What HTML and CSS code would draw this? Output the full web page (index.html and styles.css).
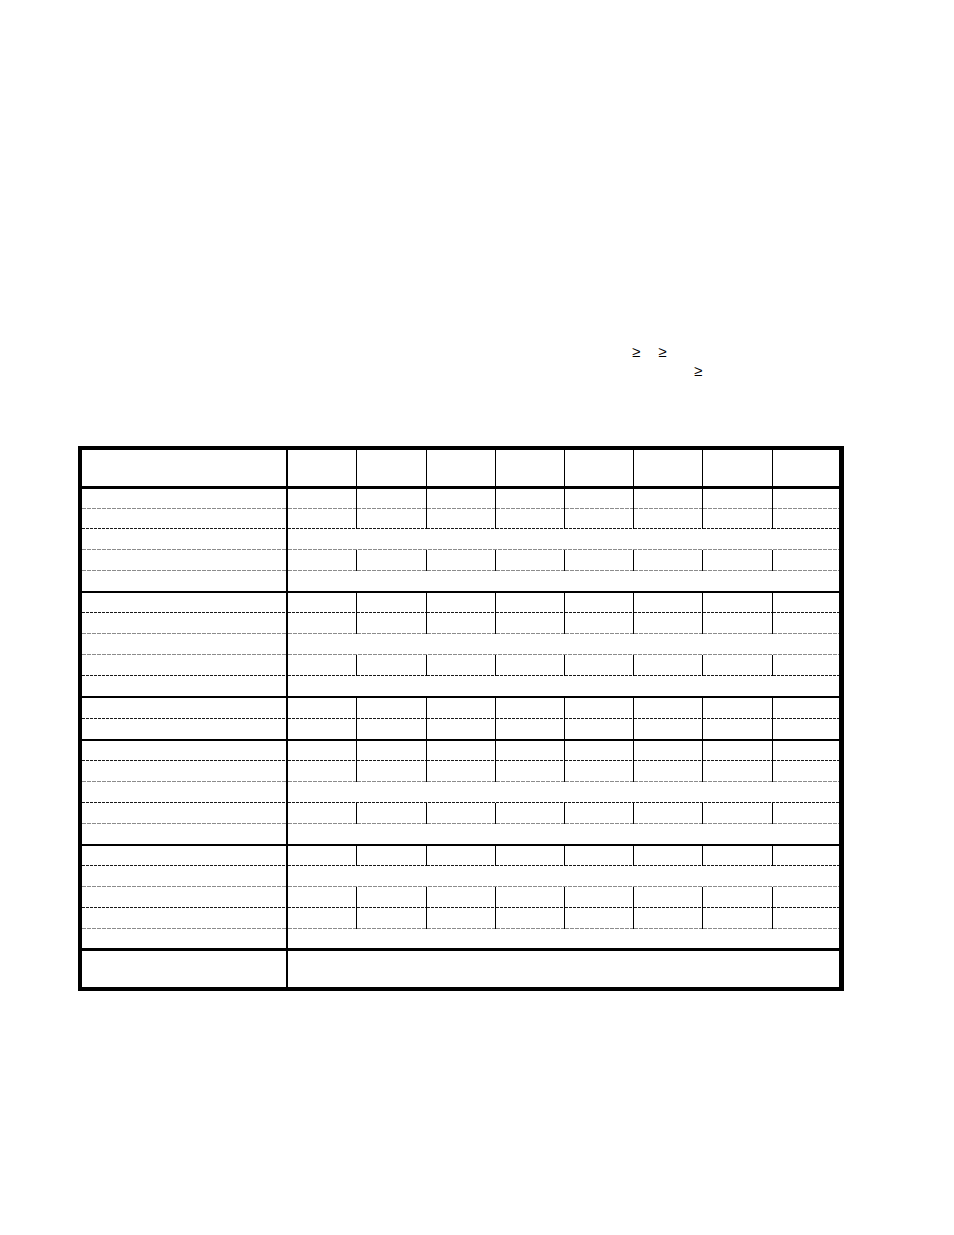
FILE: index.html
```html
<!DOCTYPE html>
<html>
<head>
<meta charset="utf-8">
<title>Table</title>
<link rel="stylesheet" href="styles.css">
</head>
<body>
<div class="page">
  <div class="intro">
    <p class="line line-1"><span class="ge ge-a">≥</span><span class="ge ge-b">≥</span></p>
    <p class="line line-2"><span class="ge ge-c">≥</span></p>
  </div>

  <table class="grid">
    <colgroup>
      <col class="w204"><col class="w70"><col class="w70"><col class="w69"><col class="w69"><col class="w69"><col class="w69"><col class="w70"><col class="w67">
    </colgroup>
    <tbody>
      <tr class="hd"><td></td><td></td><td></td><td></td><td></td><td></td><td></td><td></td><td></td></tr>
      <tr class="h20 g"><td></td><td></td><td></td><td></td><td></td><td></td><td></td><td></td><td></td></tr>
      <tr class="h20 k"><td></td><td></td><td></td><td></td><td></td><td></td><td></td><td></td><td></td></tr>
      <tr class="h21 g"><td></td><td colspan="8"></td></tr>
      <tr class="h21 g"><td></td><td></td><td></td><td></td><td></td><td></td><td></td><td></td><td></td></tr>
      <tr class="h22 b2"><td></td><td colspan="8"></td></tr>
      <tr class="h20 k"><td></td><td></td><td></td><td></td><td></td><td></td><td></td><td></td><td></td></tr>
      <tr class="h21 g"><td></td><td></td><td></td><td></td><td></td><td></td><td></td><td></td><td></td></tr>
      <tr class="h21 g"><td></td><td colspan="8"></td></tr>
      <tr class="h21 k"><td></td><td></td><td></td><td></td><td></td><td></td><td></td><td></td><td></td></tr>
      <tr class="h22 b2"><td></td><td colspan="8"></td></tr>
      <tr class="h21 k"><td></td><td></td><td></td><td></td><td></td><td></td><td></td><td></td><td></td></tr>
      <tr class="h22 b2"><td></td><td></td><td></td><td></td><td></td><td></td><td></td><td></td><td></td></tr>
      <tr class="h20 k"><td></td><td></td><td></td><td></td><td></td><td></td><td></td><td></td><td></td></tr>
      <tr class="h21 g"><td></td><td></td><td></td><td></td><td></td><td></td><td></td><td></td><td></td></tr>
      <tr class="h21 k"><td></td><td colspan="8"></td></tr>
      <tr class="h21 g"><td></td><td></td><td></td><td></td><td></td><td></td><td></td><td></td><td></td></tr>
      <tr class="h22 b2"><td></td><td colspan="8"></td></tr>
      <tr class="h20 k"><td></td><td></td><td></td><td></td><td></td><td></td><td></td><td></td><td></td></tr>
      <tr class="h21 g"><td></td><td colspan="8"></td></tr>
      <tr class="h21 k"><td></td><td></td><td></td><td></td><td></td><td></td><td></td><td></td><td></td></tr>
      <tr class="h21 g"><td></td><td></td><td></td><td></td><td></td><td></td><td></td><td></td><td></td></tr>
      <tr class="h22 b3"><td></td><td colspan="8"></td></tr>
      <tr class="h36"><td></td><td colspan="8"></td></tr>
    </tbody>
  </table>
</div>
</body>
</html>
```

FILE: styles.css
```css
html, body {
  margin: 0;
  padding: 0;
  background: #fff;
}

body {
  font-family: "Liberation Sans", Arial, sans-serif;
  color: #000;
}

.page {
  padding-top: 342px;
}

.intro {
  height: 104px;
}

.line {
  margin: 0;
  height: 19px;
  line-height: 19px;
  font-size: 15px;
  white-space: nowrap;
}

.ge {
  display: inline-block;
}

.ge-a { margin-left: 632px; }
.ge-b { margin-left: 18px; }
.ge-c { margin-left: 694px; }

.grid {
  box-sizing: border-box;
  width: 766px;
  margin-left: 78px;
  table-layout: fixed;
  border-collapse: separate;
  border-spacing: 0;
  border-style: solid;
  border-color: #000;
  border-width: 4px 5px 4px 4px;
}

.w204 { width: 204px; }
.w70 { width: 70px; }
.w69 { width: 69px; }
.w67 { width: 67px; }

.grid td {
  padding: 0;
  box-sizing: border-box;
}

.grid td + td {
  border-left: 1px solid #000;
}

.grid td:nth-child(2) {
  border-left-width: 2px;
}

.hd { height: 39px; }
.hd td { border-bottom: 3px solid #000; }

.h20 { height: 20px; }
.h21 { height: 21px; }
.h22 { height: 22px; }
.h36 { height: 36px; }

.g td {
  background: repeating-linear-gradient(to right, #8c8c8c 0 4px, transparent 4px 5px) left bottom / 100% 1px no-repeat;
}

.k td {
  background: repeating-linear-gradient(to right, #1a1a1a 0 3px, transparent 3px 4px) left bottom / 100% 1px no-repeat;
}

.b2 td { border-bottom: 2px solid #000; }
.b3 td { border-bottom: 3px solid #000; }
```
